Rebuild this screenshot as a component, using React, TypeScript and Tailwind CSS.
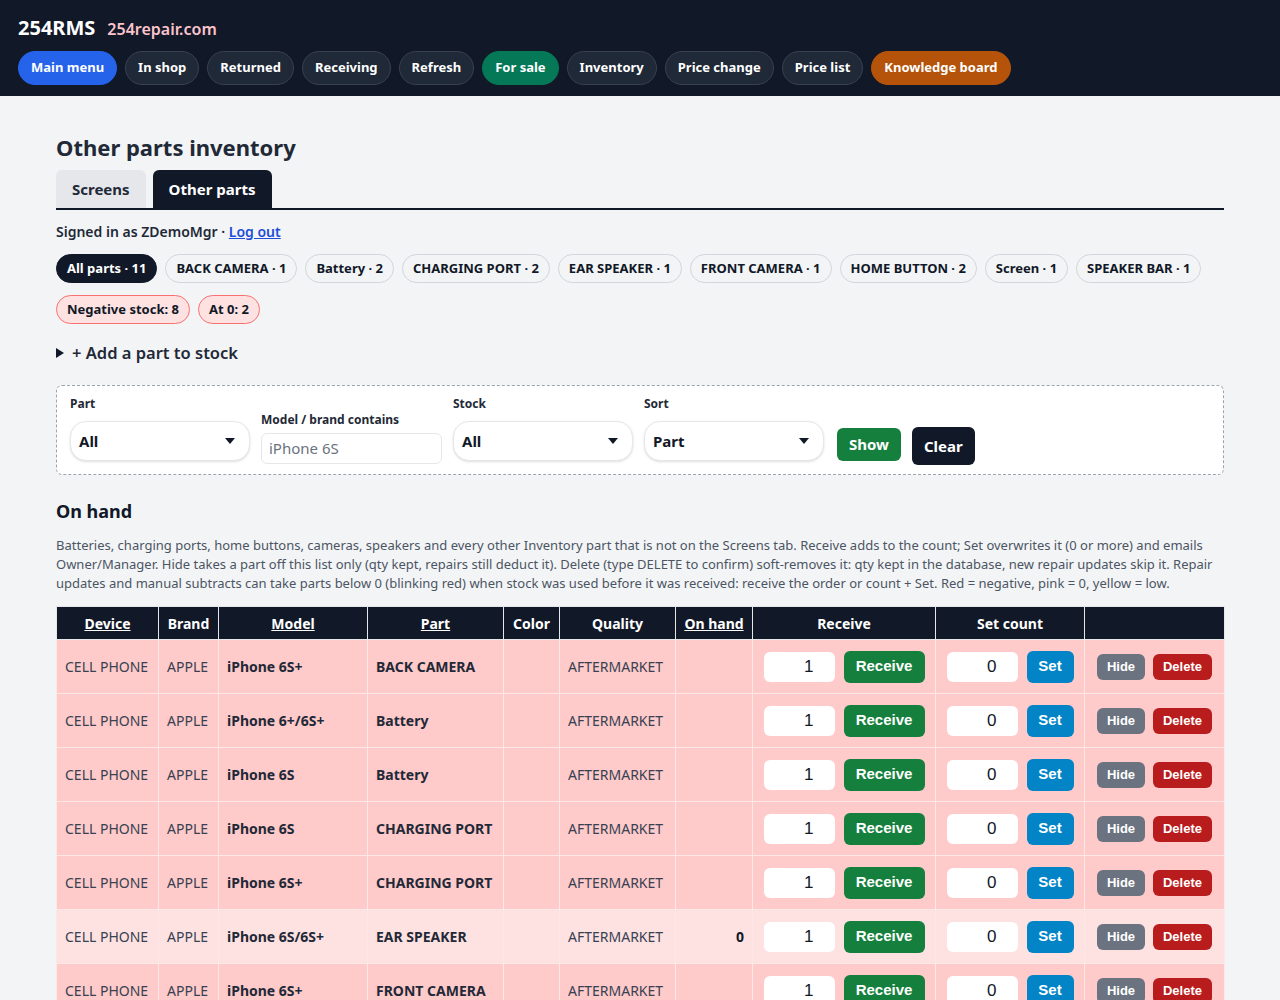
import React from 'react';

type Row = {
  device: string;
  brand: string;
  model: string;
  part: string;
  quality: string;
  onHand: string;
  zero?: boolean;
};

const navItems = [
  { label: 'Main menu', cls: 'bg-[#2563eb] border-[#2563eb]' },
  { label: 'In shop', cls: 'bg-[#1f2937] border-[#374151]' },
  { label: 'Returned', cls: 'bg-[#1f2937] border-[#374151]' },
  { label: 'Receiving', cls: 'bg-[#1f2937] border-[#374151]' },
  { label: 'Refresh', cls: 'bg-[#1f2937] border-[#374151]' },
  { label: 'For sale', cls: 'bg-[#047857] border-[#047857]' },
  { label: 'Inventory', cls: 'bg-[#1f2937] border-[#374151]' },
  { label: 'Price change', cls: 'bg-[#1f2937] border-[#374151]' },
  { label: 'Price list', cls: 'bg-[#1f2937] border-[#374151]' },
  { label: 'Knowledge board', cls: 'bg-[#b45309] border-[#b45309]' },
];

const partChips = [
  'BACK CAMERA · 1',
  'Battery · 2',
  'CHARGING PORT · 2',
  'EAR SPEAKER · 1',
  'FRONT CAMERA · 1',
  'HOME BUTTON · 2',
  'Screen · 1',
  'SPEAKER BAR · 1',
];

const rows: Row[] = [
  { device: 'CELL PHONE', brand: 'APPLE', model: 'iPhone 6S+', part: 'BACK CAMERA', quality: 'AFTERMARKET', onHand: '' },
  { device: 'CELL PHONE', brand: 'APPLE', model: 'iPhone 6+/6S+', part: 'Battery', quality: 'AFTERMARKET', onHand: '' },
  { device: 'CELL PHONE', brand: 'APPLE', model: 'iPhone 6S', part: 'Battery', quality: 'AFTERMARKET', onHand: '' },
  { device: 'CELL PHONE', brand: 'APPLE', model: 'iPhone 6S', part: 'CHARGING PORT', quality: 'AFTERMARKET', onHand: '' },
  { device: 'CELL PHONE', brand: 'APPLE', model: 'iPhone 6S+', part: 'CHARGING PORT', quality: 'AFTERMARKET', onHand: '' },
  { device: 'CELL PHONE', brand: 'APPLE', model: 'iPhone 6S/6S+', part: 'EAR SPEAKER', quality: 'AFTERMARKET', onHand: '0', zero: true },
  { device: 'CELL PHONE', brand: 'APPLE', model: 'iPhone 6S+', part: 'FRONT CAMERA', quality: 'AFTERMARKET', onHand: '' },
  { device: 'CELL PHONE', brand: 'APPLE', model: 'iPhone 6', part: 'HOME BUTTON', quality: 'AFTERMARKET', onHand: '' },
  { device: 'CELL PHONE', brand: 'APPLE', model: 'iPhone 6S', part: 'HOME BUTTON', quality: 'AFTERMARKET', onHand: '0', zero: true },
  { device: 'CELL PHONE', brand: 'APPLE', model: 'iPhone 6S', part: 'Screen', quality: 'AFTERMARKET', onHand: '' },
];

// small filled triangle used by the fake selects
const Caret = () => (
  <svg width="10" height="6" viewBox="0 0 10 6" className="shrink-0">
    <polygon points="0,0 10,0 5,6" fill="#111827" />
  </svg>
);

const FakeSelect = ({ label, value }: { label: string; value: string }) => (
  <div className="flex flex-col mb-1">
    <span className="text-[12px] leading-4 font-bold text-[#1f2937] mb-[9px]">{label}</span>
    <div className="w-[180px] h-10 rounded-2xl border border-[#e5e7eb] bg-white shadow-sm flex items-center justify-between pl-2 pr-[14px]">
      <span className="text-[15px] font-bold text-[#111827]">{value}</span>
      <Caret />
    </div>
  </div>
);

const App: React.FC = () => {
  return (
    <div className="min-h-screen bg-[#f3f4f6] font-['Noto_Sans',sans-serif] text-[#111827]">
      {/* Top bar */}
      <header className="bg-[#111827] px-[18px] pt-[14px] pb-[11px]">
        <div className="flex items-baseline gap-3 h-7">
          <span className="text-[20px] font-bold text-white leading-7">254RMS</span>
          <span className="text-[16px] font-semibold text-[#fbc4cc]">254repair.com</span>
        </div>
        <nav className="flex gap-2 mt-[9px]">
          {navItems.map((n) => (
            <span
              key={n.label}
              className={`h-[34px] px-[12px] rounded-full border flex items-center text-[13px] font-bold text-white ${n.cls}`}
            >
              {n.label}
            </span>
          ))}
        </nav>
      </header>

      <main className="px-14 pt-[37px] pb-10">
        <h1 className="text-[22px] font-bold leading-7 text-[#1f2937]">Other parts inventory</h1>

        {/* Tabs */}
        <div className="flex gap-[7px] mt-[9px] border-b-2 border-[#111827]">
          <span className="h-[38px] px-4 flex items-center rounded-t-md bg-[#e5e7eb] text-[15px] font-bold text-[#1f2937]">
            Screens
          </span>
          <span className="h-[38px] px-4 flex items-center rounded-t-md bg-[#111827] text-[15px] font-bold text-white">
            Other parts
          </span>
        </div>

        <p className="mt-3 text-[14px] leading-5 font-semibold text-[#1f2937]">
          Signed in as ZDemoMgr · <a className="text-[#1d4ed8] underline">Log out</a>
        </p>

        {/* Part filter chips */}
        <div className="flex flex-wrap gap-2 mt-3">
          <span className="h-[29px] px-[10px] rounded-full bg-[#111827] border border-[#111827] text-white text-[13px] font-bold flex items-center">
            All parts · 11
          </span>
          {partChips.map((c) => (
            <span
              key={c}
              className="h-[29px] px-[10px] rounded-full border border-[#d1d5db] text-[13px] font-bold text-[#111827] flex items-center"
            >
              {c}
            </span>
          ))}
        </div>
        <div className="flex gap-2 mt-3">
          <span className="h-[29px] px-[10px] rounded-full bg-[#fee2e2] border border-[#f87171] text-[13px] font-bold text-[#111827] flex items-center">
            Negative stock: 8
          </span>
          <span className="h-[29px] px-[10px] rounded-full bg-[#fee2e2] border border-[#f87171] text-[13px] font-bold text-[#111827] flex items-center">
            At 0: 2
          </span>
        </div>

        <div className="mt-[17px] flex items-center gap-2 h-6">
          <svg width="8" height="10" viewBox="0 0 8 10">
            <polygon points="0,0 8,5 0,10" fill="#111827" />
          </svg>
          <span className="text-[16.5px] font-semibold text-[#1f2937]">+ Add a part to stock</span>
        </div>

        {/* Filters */}
        <div className="mt-5 border border-dashed border-[#9ca3af] rounded-md bg-white pt-[10px] pb-[9px] px-[13px] flex items-end gap-[11px]">
          <FakeSelect label="Part" value="All" />
          <div className="flex flex-col mb-px">
            <span className="text-[12px] leading-4 font-bold text-[#1f2937] mb-[5px]">Model / brand contains</span>
            <div className="w-[181px] h-[31px] rounded-md border border-[#e5e7eb] bg-white flex items-center px-[7px]">
              <span className="text-[15px] text-[#6b7280]">iPhone 6S</span>
            </div>
          </div>
          <FakeSelect label="Stock" value="All" />
          <FakeSelect label="Sort" value="Part" />
          <button className="ml-[2px] mb-1 h-[33px] px-3 rounded-md bg-[#15803d] text-white text-[15px] font-bold">
            Show
          </button>
          <button className="h-[38px] px-3 rounded-md bg-[#111827] text-white text-[15px] font-bold">Clear</button>
        </div>

        <h2 className="mt-[23px] text-[18px] leading-[26px] font-bold text-[#111827]">On hand</h2>
        <p className="mt-3 text-[13px] leading-[19px] text-[#4b5563]">
          Batteries, charging ports, home buttons, cameras, speakers and every other Inventory part that is not on the
          Screens tab. Receive adds to the count; Set overwrites it (0 or more) and emails Owner/Manager. Hide takes a
          part off this list only (qty kept, repairs still deduct it). Delete (type DELETE to confirm) soft-removes it:
          qty kept in the database, new repair updates skip it. Repair updates and manual subtracts can take parts below
          0 (blinking red) when stock was used before it was received: receive the order or count + Set. Red =
          negative, pink = 0, yellow = low.
        </p>

        {/* Table */}
        <table className="mt-[13px] w-full table-fixed border-collapse text-[14px]">
          <colgroup>
            <col className="w-[102px]" />
            <col className="w-[60px]" />
            <col className="w-[149px]" />
            <col className="w-[136px]" />
            <col className="w-[56px]" />
            <col className="w-[116px]" />
            <col className="w-[77px]" />
            <col className="w-[183px]" />
            <col className="w-[149px]" />
            <col className="w-[140px]" />
          </colgroup>
          <thead>
            <tr className="bg-[#111827] text-white h-[33px]">
              <th className="border border-[#e5e7eb] font-bold underline">Device</th>
              <th className="border border-[#e5e7eb] font-bold">Brand</th>
              <th className="border border-[#e5e7eb] font-bold underline">Model</th>
              <th className="border border-[#e5e7eb] font-bold underline">Part</th>
              <th className="border border-[#e5e7eb] font-bold">Color</th>
              <th className="border border-[#e5e7eb] font-bold">Quality</th>
              <th className="border border-[#e5e7eb] font-bold underline">On hand</th>
              <th className="border border-[#e5e7eb] font-bold">Receive</th>
              <th className="border border-[#e5e7eb] font-bold">Set count</th>
              <th className="border border-[#e5e7eb] font-bold"></th>
            </tr>
          </thead>
          <tbody>
            {rows.map((r, i) => (
              <tr key={i} className={`h-[54px] ${r.zero ? 'bg-[#fee2e2]' : 'bg-[#fecaca]'}`}>
                <td className="border border-[#fde8e8] px-2 text-[#374151] whitespace-nowrap">{r.device}</td>
                <td className="border border-[#fde8e8] px-2 text-[#374151]">{r.brand}</td>
                <td className="border border-[#fde8e8] px-2 font-bold text-[#1f2937]">{r.model}</td>
                <td className="border border-[#fde8e8] px-2 font-bold text-[#1f2937]">{r.part}</td>
                <td className="border border-[#fde8e8] px-2"></td>
                <td className="border border-[#fde8e8] px-2 text-[#374151]">{r.quality}</td>
                <td className="border border-[#fde8e8] px-2 text-right font-bold text-[#111827]">{r.onHand}</td>
                <td className="border border-[#fde8e8]">
                  <div className="flex items-center justify-center gap-[9px] font-['Liberation_Sans',sans-serif]">
                    <span className="w-[71px] h-[30px] rounded-md bg-white flex items-center justify-end pr-[21px] text-[17px] text-[#111827]">
                      1
                    </span>
                    <button className="w-[81px] h-8 rounded-md bg-[#15803d] text-white text-[15px] font-bold">
                      Receive
                    </button>
                  </div>
                </td>
                <td className="border border-[#fde8e8]">
                  <div className="flex items-center justify-center gap-[9px] font-['Liberation_Sans',sans-serif]">
                    <span className="w-[71px] h-[30px] rounded-md bg-white flex items-center justify-end pr-[21px] text-[17px] text-[#111827]">
                      0
                    </span>
                    <button className="w-[47px] h-8 rounded-md bg-[#0284c7] text-white text-[15px] font-bold">Set</button>
                  </div>
                </td>
                <td className="border border-[#fde8e8]">
                  <div className="flex items-center justify-center gap-2 font-['Liberation_Sans',sans-serif]">
                    <button className="w-12 h-[26px] rounded-md bg-[#6b7280] text-white text-[13px] font-bold">Hide</button>
                    <button className="w-[59px] h-[26px] rounded-md bg-[#b91c1c] text-white text-[13px] font-bold">
                      Delete
                    </button>
                  </div>
                </td>
              </tr>
            ))}
          </tbody>
        </table>
      </main>
    </div>
  );
};

export default App;
